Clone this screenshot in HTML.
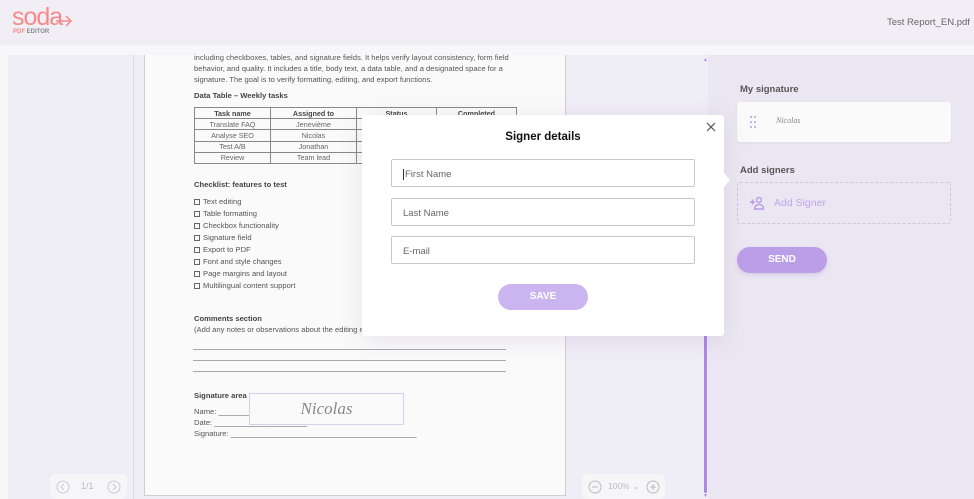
<!DOCTYPE html>
<html><head><meta charset="utf-8"><style>
*{box-sizing:border-box;margin:0;padding:0}
body{width:974px;height:499px;overflow:hidden;background:#efedf5;font-family:"Liberation Sans",sans-serif;position:relative}
.abs{position:absolute}
.hdr{left:0;top:0;width:974px;height:45px;background:#f1eef5}
.strip{left:0;top:45px;width:974px;height:10px;background:#f7f6f9}
.doc{left:144px;top:55px;width:422px;height:441px;background:#fafafa;border:1px solid #cfcdd4;border-top:none}
.d{position:absolute;font-size:7.6px;color:#555;white-space:nowrap}
.b{font-weight:bold;color:#444}
table{position:absolute;left:49px;top:52px;border-collapse:collapse;font-size:7.2px;color:#666}
td{border:1px solid #888;height:11.2px;text-align:center;padding:0}
.cb{display:inline-block;width:6px;height:6px;border:1px solid #666;margin-right:3px;vertical-align:-1px}
.ln{position:absolute;left:48px;width:313px;border-top:1px solid #aaa}
.modal{left:362px;top:115px;width:362px;height:221px;background:#fff;border-radius:3px;box-shadow:0 4px 24px rgba(120,100,160,.15)}
.inp{position:absolute;left:29px;width:304px;height:28px;border:1px solid #c8c8c8;border-radius:2px;font-size:9.5px;color:#666;padding:9px 11px}
.right{left:708px;top:55px;width:266px;height:444px;background:#ebe7f2}
</style></head><body>
<div class="abs hdr"></div>
<div class="abs" style="left:12px;top:3px;font-size:25px;color:#f58a8a;letter-spacing:-1px">soda</div>
<svg class="abs" style="left:55px;top:13px" width="18" height="14"><path d="M1 8h14M11 3l5 5-5 5" stroke="#f58a8a" stroke-width="1.5" fill="none"/></svg>
<div class="abs" style="left:13px;top:29px;font-size:6px;font-weight:bold;color:#f58a8a">PDF <span style="color:#888">EDITOR</span></div>
<div class="abs" style="left:887px;top:17px;font-size:9.5px;color:#666">Test Report_EN.pdf</div>
<div class="abs strip"></div>
<div class="abs" style="left:0;top:55px;width:8px;height:444px;background:#f7f6f9"></div>
<div class="abs" style="left:133px;top:55px;width:1px;height:444px;background:#ddd"></div>
<div class="abs doc">
<div class="d" style="left:49px;top:-2px">including checkboxes, tables, and signature fields. It helps verify layout consistency, form field</div>
<div class="d" style="left:49px;top:9px">behavior, and quality. It includes a title, body text, a data table, and a designated space for a</div>
<div class="d" style="left:49px;top:20px">signature. The goal is to verify formatting, editing, and export functions.</div>
<div class="d b" style="left:49px;top:36px">Data Table – Weekly tasks</div>
<table><tr><td style="width:76px" class="b">Task name</td><td style="width:86px" class="b">Assigned to</td><td style="width:80px" class="b">Status</td><td style="width:80px" class="b">Completed</td></tr>
<tr><td>Translate FAQ</td><td>Jenevième</td><td></td><td></td></tr>
<tr><td>Analyse SEO</td><td>Nicolas</td><td></td><td></td></tr>
<tr><td>Test A/B</td><td>Jonathan</td><td></td><td></td></tr>
<tr><td>Review</td><td>Team lead</td><td></td><td></td></tr></table>
<div class="d b" style="left:49px;top:125px">Checklist: features to test</div>
<div class="d" style="left:49px;top:142px"><span class="cb"></span>Text editing</div>
<div class="d" style="left:49px;top:154px"><span class="cb"></span>Table formatting</div>
<div class="d" style="left:49px;top:166px"><span class="cb"></span>Checkbox functionality</div>
<div class="d" style="left:49px;top:178px"><span class="cb"></span>Signature field</div>
<div class="d" style="left:49px;top:190px"><span class="cb"></span>Export to PDF</div>
<div class="d" style="left:49px;top:202px"><span class="cb"></span>Font and style changes</div>
<div class="d" style="left:49px;top:214px"><span class="cb"></span>Page margins and layout</div>
<div class="d" style="left:49px;top:226px"><span class="cb"></span>Multilingual content support</div>
<div class="d b" style="left:49px;top:259px">Comments section</div>
<div class="d" style="left:49px;top:270px">(Add any notes or observations about the editing e</div>
<div class="ln" style="top:294px"></div><div class="ln" style="top:305px"></div><div class="ln" style="top:316px"></div>
<div class="d b" style="left:49px;top:336px">Signature area</div>
<div class="d" style="left:49px;top:352px">Name: __________</div>
<div class="d" style="left:49px;top:363px">Date: ______________________</div>
<div class="d" style="left:49px;top:374px">Signature: ____________________________________________</div>
<div class="abs" style="left:104px;top:338px;width:155px;height:32px;border:1.5px solid #d9cfee;background:#fafafa;text-align:center;font-family:'Liberation Serif',serif;font-style:italic;font-size:17px;color:#888;padding-top:5px">Nicolas</div>
</div>
<div class="abs" style="left:50px;top:474px;width:77px;height:25px;background:#f6f5f8;border-radius:5px"></div>
<svg class="abs" style="left:56px;top:480px" width="14" height="14"><circle cx="7" cy="7" r="6" stroke="#ccc" fill="none"/><path d="M8 4L5 7l3 3" stroke="#ccc" fill="none"/></svg>
<div class="abs" style="left:81px;top:481px;font-size:9px;color:#bbb">1/1</div>
<svg class="abs" style="left:107px;top:480px" width="14" height="14"><circle cx="7" cy="7" r="6" stroke="#ccc" fill="none"/><path d="M6 4l3 3-3 3" stroke="#ccc" fill="none"/></svg>
<div class="abs" style="left:582px;top:474px;width:83px;height:25px;background:#f6f5f8;border-radius:5px"></div>
<svg class="abs" style="left:588px;top:480px" width="14" height="14"><circle cx="7" cy="7" r="6" stroke="#bbb" fill="none"/><path d="M4 7h6" stroke="#bbb"/></svg>
<div class="abs" style="left:608px;top:481px;font-size:8.5px;color:#bbb">100% ⌄</div>
<svg class="abs" style="left:646px;top:480px" width="14" height="14"><circle cx="7" cy="7" r="6" stroke="#bbb" fill="none"/><path d="M4 7h6M7 4v6" stroke="#bbb"/></svg>
<div class="abs" style="left:704px;top:335px;width:3px;height:158px;background:#a98ae2;border-radius:2px"></div>
<div class="abs" style="left:703px;top:57px;font-size:5px;color:#a98ae2">▲</div>
<div class="abs" style="left:703px;top:493px;font-size:5px;color:#a98ae2">▼</div>
<div class="abs right"></div>
<div class="abs" style="left:740px;top:84px;font-size:9.5px;font-weight:bold;color:#555">My signature</div>
<div class="abs" style="left:737px;top:102px;width:214px;height:40px;background:#fafafa;border-radius:3px;box-shadow:0 1px 3px rgba(0,0,0,.06)"></div>
<svg class="abs" style="left:749px;top:115px" width="8" height="14"><g fill="#b89ae8"><circle cx="2" cy="2" r="1"/><circle cx="6" cy="2" r="1"/><circle cx="2" cy="7" r="1"/><circle cx="6" cy="7" r="1"/><circle cx="2" cy="12" r="1"/><circle cx="6" cy="12" r="1"/></g></svg>
<div class="abs" style="left:776px;top:116px;font-family:'Liberation Serif',serif;font-style:italic;font-size:8px;color:#888">Nicolas</div>
<div class="abs" style="left:740px;top:165px;font-size:9.5px;font-weight:bold;color:#555">Add signers</div>
<div class="abs" style="left:737px;top:182px;width:214px;height:42px;border:1px dashed #cfc4e2;border-radius:3px"></div>
<svg class="abs" style="left:749px;top:196px" width="16" height="14"><g stroke="#b89ae8" stroke-width="1.4" fill="none"><path d="M1 6h5M3.5 3.5v5"/><circle cx="10" cy="4" r="2.5"/><path d="M5.5 13c0-3 2-4.5 4.5-4.5s4.5 1.5 4.5 4.5z"/></g></svg>
<div class="abs" style="left:774px;top:197px;font-size:10.5px;color:#c0a6ec">Add Signer</div>
<div class="abs" style="left:737px;top:247px;width:90px;height:26px;background:#bb9ee8;border-radius:13px;color:#fff;font-size:10px;font-weight:bold;text-align:center;line-height:26px;box-shadow:0 2px 5px rgba(150,120,200,.25)">SEND</div>
<div class="abs modal">
<div class="abs" style="left:0;width:362px;top:16px;text-align:center;font-size:11.5px;font-weight:bold;color:#111">Signer details</div>
<svg class="abs" style="left:344px;top:7px" width="10" height="10"><path d="M1 1l8 8M9 1L1 9" stroke="#555" stroke-width="1.2"/></svg>
<div class="inp" style="top:44px"><span style="border-left:1px solid #333;margin-right:1px"></span>First Name</div>
<div class="inp" style="top:83px">Last Name</div>
<div class="inp" style="top:121px">E-mail</div>
<div class="abs" style="left:136px;top:169px;width:90px;height:26px;background:#cbb5f1;border-radius:13px;color:#fff;font-size:10px;font-weight:bold;text-align:center;line-height:26px">SAVE</div>
<div class="abs" style="left:362px;top:58px;width:0;height:0;border-top:7px solid transparent;border-bottom:7px solid transparent;border-left:6px solid #fff"></div>
</div>
</body></html>
